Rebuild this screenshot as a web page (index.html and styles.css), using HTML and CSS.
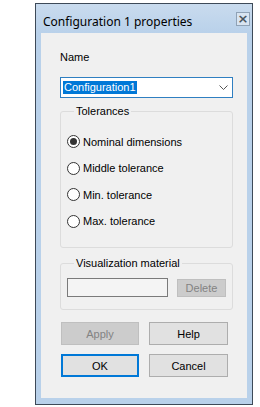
FILE: index.html
```html
<!DOCTYPE html>
<html lang="en">
<head>
    <meta charset="UTF-8">
    <meta name="viewport" content="width=device-width, initial-scale=1.0">
    <title>Configuration 1 properties</title>
    <link rel="stylesheet" href="styles.css">
</head>
<body>
    <div class="window">
        <div class="titlebar">
            <span class="title">Configuration 1 properties</span>
            <span class="close">&times;</span>
        </div>
        <div class="client">
            <div class="label">Name</div>
            <div class="combo">
                <span class="selected">Configuration1</span>
                <svg class="chevron" width="9" height="6" viewBox="0 0 9 6">
                    <path d="M0.5 0.5 L4.5 4.5 L8.5 0.5" fill="none" stroke="#555" stroke-width="1"/>
                </svg>
            </div>

            <fieldset class="group tolerances">
                <legend>Tolerances</legend>
                <label class="radio"><input type="radio" name="tol" checked> Nominal dimensions</label>
                <label class="radio"><input type="radio" name="tol"> Middle tolerance</label>
                <label class="radio"><input type="radio" name="tol"> Min. tolerance</label>
                <label class="radio"><input type="radio" name="tol"> Max. tolerance</label>
            </fieldset>

            <fieldset class="group material">
                <legend>Visualization material</legend>
                <div class="material-row">
                    <div class="field"></div>
                    <button class="btn small" disabled>Delete</button>
                </div>
            </fieldset>

            <div class="buttons">
                <button class="btn" disabled>Apply</button>
                <button class="btn">Help</button>
                <button class="btn default">OK</button>
                <button class="btn">Cancel</button>
            </div>
        </div>
    </div>
</body>
</html>
```

FILE: styles.css
```css
body {
    margin: 0;
    background: #fff;
    font-family: "Liberation Sans", Arial, sans-serif;
    font-size: 11px;
    color: #000;
}

.window {
    margin: 3px 0 0 35px;
    width: 218px;
    height: 402px;
    box-sizing: border-box;
    border: 1px solid #3d4a58;
    background: #b9d1ea;
    padding: 0 5px 6px 5px;
    display: flex;
    flex-direction: column;
}

.titlebar {
    height: 29px;
    display: flex;
    align-items: center;
    justify-content: space-between;
    background: linear-gradient(#c9dbee, #b9d1ea);
    margin: 0 -5px;
    padding-left: 7px;
    padding-right: 2px;
}

.title {
    font-family: "Noto Sans", "Open Sans", sans-serif;
    font-size: 12px;
    color: #000;
    margin-top: 6px;
}

.close {
    width: 12px;
    height: 12px;
    border: 1px solid #8fa2b6;
    background: #d8e4f1;
    color: #4a5560;
    font-family: "DejaVu Sans", sans-serif;
    font-size: 13px;
    font-weight: bold;
    line-height: 11px;
    text-align: center;
    margin-top: 1px;
}

.client {
    flex: 1;
    background: #f0f0f0;
    padding: 18px 14px 0 19px;
    display: flex;
    flex-direction: column;
}

.label {
    line-height: 13px;
}

.combo {
    margin-top: 13px;
    height: 21px;
    box-sizing: border-box;
    border: 1px solid #2f7fc1;
    background: #fff;
    display: flex;
    align-items: center;
    justify-content: space-between;
    padding: 0 4px 0 2px;
}

.selected {
    background: #0078d7;
    color: #fff;
    line-height: 13px;
    padding: 0 1px;
}

.group {
    margin: 0;
    border: 1px solid #dcdcdc;
    border-radius: 3px;
    padding: 0;
    box-sizing: border-box;
}

.group legend {
    margin-left: 7px;
    padding: 0 2px;
    line-height: 13px;
}

.tolerances {
    margin-top: 7px;
    height: 143px;
    display: flex;
    flex-direction: column;
    padding: 17px 0 0 6px;
    gap: 13.5px;
}

.radio {
    display: flex;
    align-items: center;
    height: 13px;
    gap: 3px;
}

.radio input {
    appearance: none;
    -webkit-appearance: none;
    margin: 0;
    width: 13px;
    height: 13px;
    border: 1px solid #333;
    border-radius: 50%;
    background: #fff;
    box-sizing: border-box;
    display: flex;
    align-items: center;
    justify-content: center;
}

.radio input:checked::after {
    content: "";
    width: 7px;
    height: 7px;
    border-radius: 50%;
    background: #333;
}

.material {
    margin-top: 9px;
    height: 53px;
    padding: 8px 0 0 6px;
}

.material-row {
    display: flex;
    align-items: center;
    gap: 9px;
}

.field {
    width: 101px;
    height: 19px;
    box-sizing: border-box;
    border: 1px solid #7a7a7a;
    background: #f4f4f4;
}

.buttons {
    margin-top: 12px;
    display: grid;
    grid-template-columns: 78px 79px;
    column-gap: 10px;
    row-gap: 9px;
    padding-left: 1px;
}

.btn {
    font-family: "Liberation Sans", Arial, sans-serif;
    font-size: 11px;
    height: 23px;
    border: 1px solid #adadad;
    background: #e1e1e1;
    color: #000;
    padding: 0;
}

.btn:disabled {
    background: #cccccc;
    border-color: #bfbfbf;
    color: #838383;
}

.btn.small {
    width: 49px;
    height: 18px;
}

.btn.default {
    border: 2px solid #0078d7;
}
```
